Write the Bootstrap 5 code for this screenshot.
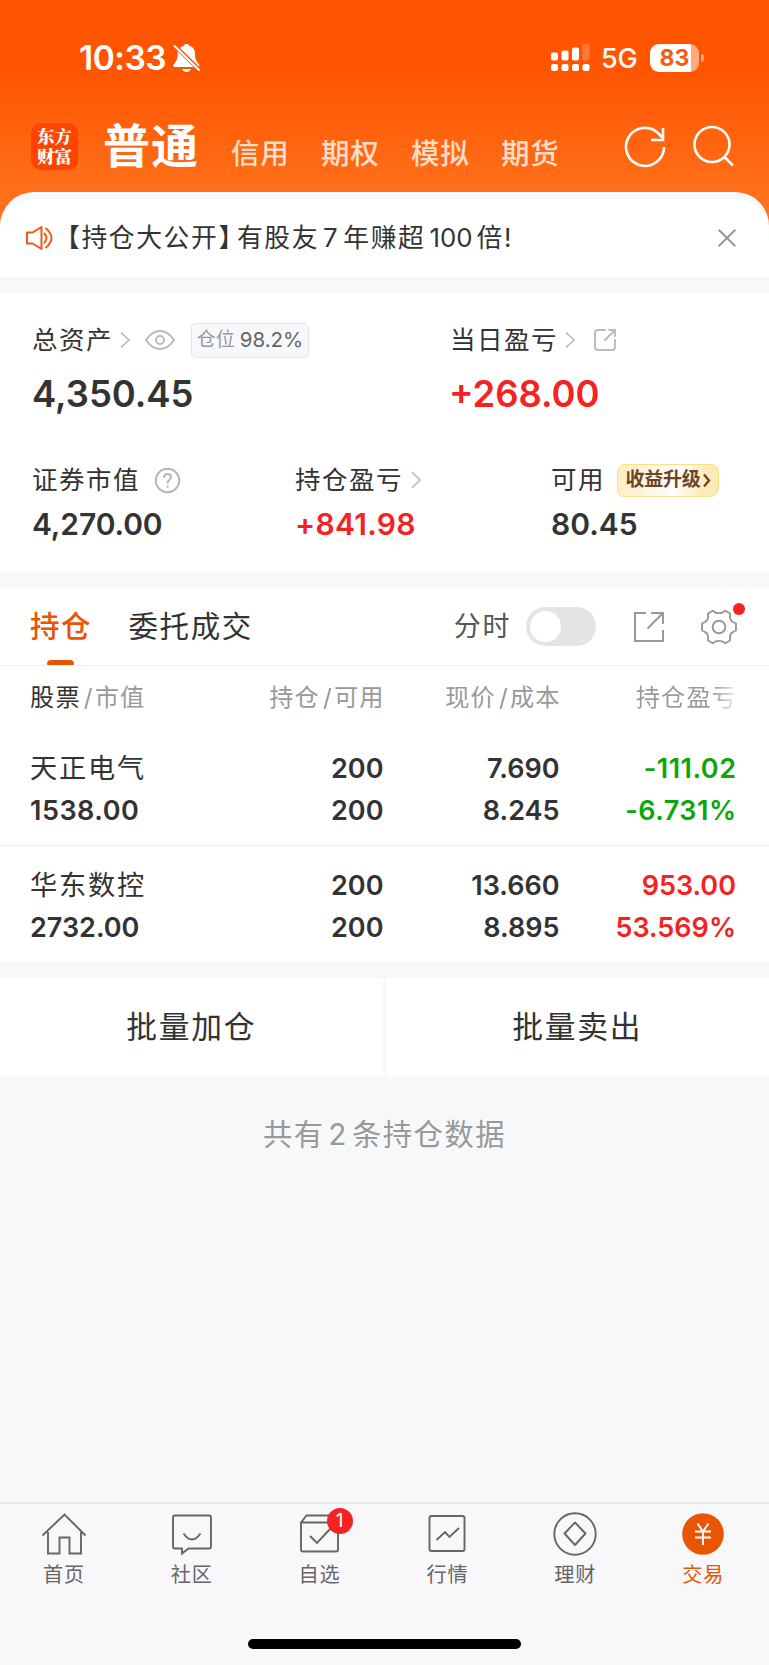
<!DOCTYPE html>
<html lang="zh-CN">
<head>
<meta charset="utf-8">
<meta name="viewport" content="width=device-width, initial-scale=1">
<title>普通交易 - 持仓</title>
<link href="https://cdn.jsdelivr.net/npm/bootstrap@5.3.0/dist/css/bootstrap.min.css" rel="stylesheet">
<style>
  :root { --ink:#333; --brand:#ea5504; --rise:#f52222; --fall:#0aa60a; --soft:#999; --page:#f7f8fa; }
  body { font-family: Inter, "Noto Sans CJK SC", sans-serif; color: var(--ink); background: var(--page); line-height: 1; }
  svg { display:block; fill:none; flex:none; overflow:visible; }
  .screen { height: 1665px; white-space: nowrap; overflow: hidden; }
  .top { background: linear-gradient(#ff5500 0, #ff5500 70px, #ff6f1a 192px, #ff7722 240px); height: 240px; }
  .status { height: 116px; padding-left: 79px; padding-right: 65px; color:#fff; }
  .clock { font-size: 33.5px; font-weight: 600; width: 94px; letter-spacing: -.5px; padding-top: 1px; }
  .net { font-size: 27px; font-weight: 500; width: 37px; margin-left: 11px; letter-spacing: -.3px; padding-top: 1px; }
  .battery { width: 49px; height: 28px; border-radius: 9px; background: linear-gradient(90deg,#fff 41px,rgba(255,255,255,.5) 41px); color:#f65a0c; font-size: 23px; font-weight: 700; line-height: 28px; margin-left: 12px; }
  .nub { width: 3px; height: 8px; border-radius: 0 5px 5px 0; background: rgba(255,255,255,.5); margin-left: 2px; }
  .brandbar { height: 76px; padding-left: 31px; }
  .logo { width: 47px; height: 47px; border-radius: 10px; background:#ff4400; color:#fff; font: 900 17.5px/20px "Noto Serif CJK SC","Noto Sans CJK SC",serif; margin-top: 7px; padding-top: 3px; }
  .current { font-size: 47px; font-weight: 700; letter-spacing: 1px; line-height: 60px; margin-left: 25px; width: 128px; color: #fff; }
  .alt { font-size: 28.5px; font-weight: 500; letter-spacing: .8px; line-height: 76px; width: 90px; color: rgba(255,255,255,.8); }
  .sheet { margin-top: -48px; border-radius: 34px 34px 0 0; background: #fff; border-top: 7px solid var(--page); height: 85px; padding-left: 26px; padding-right: 33px; }
  .notice { font-size: 25.8px; letter-spacing: 1.6px; margin-left: 1px; }
  .half { font-feature-settings: "halt"; margin-right: 4px; }
  .gap-band { height: 16px; background: var(--page); }
  .assets { height: 279px; padding: 26px 31px 0 32px; }
  .cap-lbl { font-size: 25.5px; letter-spacing: 1.5px; line-height: 42px; }
  .pos { width: 118px; height: 35px; border: 1px solid #e4e5ea; border-radius: 5px; background: #f7f8fb; font-size: 20.5px; color:#666; }
  .big { font-size: 36.4px; font-weight: 600; line-height: 50px; margin-top: 8px; }
  .mid { font-size: 30px; font-weight: 600; line-height: 36px; margin-top: 5px; }
  .w-l { width: 418px; } .w-1 { width: 263px; } .w-2 { width: 256px; }
  .up { color: var(--rise); } .down { color: var(--fall); }
  .promo { width: 102px; height: 33px; border: 1.5px solid #fbe08a; border-radius: 8px 7px 9px 7px; background: linear-gradient(100deg,#ffedc0,#fffaf0 45%,#fff 58%,#ffeab5 85%); color:#6b4528; font-size: 19px; font-weight: 700; }
  .tabs { height: 78px; border-bottom: 1px solid #f0f0f2; padding-left: 30px; padding-right: 32px; font-size: 29.5px; letter-spacing: 1.6px; }
  .tab-on { color: var(--brand); font-weight: 500; height: 77px; line-height: 77px; width: 98.5px; }
  .tab-on::after { content:""; position:absolute; left:17px; bottom:0; width:27px; height:5px; border-radius: 4px 4px 1px 1px; background: var(--brand); }
  .toggle { width: 70px; height: 39px; border-radius: 20px; background:#e4e4e7; padding: 4px; }
  .toggle i { display:block; width:31px; height:31px; border-radius:50%; background:#fff; }
  .dot { width: 12px; height: 12px; right: -8px; top: -6px; background: var(--rise); }
  .grid4 { display:grid; grid-template-columns: 165px 188.500px 176px 176.500px; padding-left: 30px; text-align: right; }
  .grid4 > :first-child { text-align: left; }
  .thead4 { height: 64px; line-height: 64px; font-size: 24.2px; letter-spacing: 1.2px; color: var(--soft); }
  .thead4 > * { margin-right: -1.2px; }
  .sl { padding: 0 1px 0 3px; }
  .fade-r { background: linear-gradient(90deg,#999 76%,#eee 99%); -webkit-background-clip:text; background-clip:text; color: transparent; }
  .holding { height: 116px; padding-top: 19px; font-size: 27px; line-height: 42px; font-weight: 600; }
  .first { padding-top: 18px; border-bottom: 1px solid #f0f0f2; }
  .wide { letter-spacing: .5px; margin-right: -.5px; }
  .stock { font-weight: 400; letter-spacing: 1.8px; font-size: 27.2px; }
  .batch { height: 98px; font-size: 30.8px; letter-spacing: 1.7px; }
  .batch > div { background:#fff; }
  .count { font-size: 29.3px; letter-spacing: 1.5px; color: var(--soft); margin-top: 37px; line-height: 44px; }
  .dock { height: 163px; background:#f8f8fb; border-top: 2px solid #e9eaec; color:#666; }
  .dock .item { width: 127.85px; font-size: 20.2px; letter-spacing: .8px; }
  .dock svg { width: 48px; height: 48px; margin: 6px 0 3px; stroke: #666; stroke-width: 1.9; }
  .dock .lbl { line-height: 28px; margin-bottom: 1px; }
  .pip { width: 26px; height: 26px; background: var(--rise); color:#fff; font-size: 19px; line-height: 26px; left: 71px; top: 4px; letter-spacing: 0; }
  .homebar { width: 273px; height: 10px; border-radius: 5px; background:#000; margin-top: 49px; margin-left: 248px; }
</style>
</head>
<body>
<main class="screen d-flex flex-column">
  <header class="top flex-shrink-0">
    <div class="status d-flex align-items-center">
      <span class="clock">10:33</span>
      <svg width="27" height="28" viewBox="0 0 27 28"><path fill="#fff" d="M7 4C8.300 2.600 9.300 2.400 10.500 2 11 .4 12.200 0 13.500 0S16 .4 16.500 2C20.500 3 22 6 22 10c0 5 1 6.500 4 10.500.6 1 .5 1.700-.1 2.100L7 4ZM4.700 7.500 20.500 23H1.500C0 23 0 21.500.8 20.500 4 16.500 4.700 14 4.700 7.500ZM9 25h9c-.8 2-2.500 3-4.500 3S9.800 27 9 25Z"/><path stroke="#fff" stroke-width="2" stroke-linecap="round" d="m1.500 2 24.500 24"/></svg>
      <svg class="ms-auto" width="39" height="28" viewBox="0 0 39 28"><g fill="#fff"><rect x="0" y="8.500" width="7" height="8" rx="2"/><rect x="10.500" y="6.500" width="7" height="10" rx="2"/><rect x="21" y="3.500" width="7" height="13" rx="2"/><rect x="31.500" y="0" width="7" height="16.500" rx="2" opacity=".22"/><rect x="0" y="20" width="7" height="7" rx="2"/><rect x="10.500" y="20" width="7" height="7" rx="2"/><rect x="21" y="20" width="7" height="7" rx="2"/><rect x="31.500" y="20" width="7" height="7" rx="2"/></g></svg>
      <span class="net">5G</span>
      <div class="battery text-center">83</div><div class="nub"></div>
    </div>
    <nav class="brandbar d-flex">
      <div class="logo text-center">东方<br>财富</div>
      <span class="current">普通</span>
      <span class="alt">信用</span><span class="alt">期权</span><span class="alt">模拟</span><span class="alt">期货</span>
      <svg class="mt-2" style="margin-left:33px" width="42" height="42" viewBox="0 0 42 42" stroke="#fff" stroke-width="2.600"><path d="M40 23a19 19 0 1 1-5.500-13.500L39 14M39 4v12H27"/></svg>
      <svg style="margin:9px 0 0 27px" width="42" height="42" viewBox="0 0 42 42" stroke="#fff" stroke-width="2.600"><circle cx="19" cy="19.500" r="17.500"/><path d="m31.500 32 8.500 8.500"/></svg>
    </nav>
  </header>

  <section class="sheet d-flex align-items-center flex-shrink-0">
    <svg width="27" height="24" viewBox="0 0 27 24" stroke="#f05a14" stroke-width="2" stroke-linejoin="round" stroke-linecap="round"><path d="M1 6.500h5.500L15.500 1v22l-9-5.500H1ZM18.500 7.500q4 4.500 0 9M20 2.500q11 9.500 0 19"/></svg>
    <span class="notice">【持仓大公开<span class="half">】</span>有股友<span class="mx-1">7</span>年赚超<span class="mx-1" style="letter-spacing:0">100</span>倍!</span>
    <svg class="ms-auto" width="18" height="18" viewBox="0 0 18 18" stroke="#999" stroke-width="2"><path d="m.7.7 16.600 16.600m0-16.600L.7 17.300"/></svg>
  </section>
  <div class="gap-band flex-shrink-0"></div>

  <section class="assets bg-white flex-shrink-0">
    <div class="d-flex">
      <div class="w-l">
        <div class="cap-lbl d-flex align-items-center">总资产
          <svg style="margin-left:7px" width="10" height="16" viewBox="0 0 10 16" stroke="#bbb" stroke-width="1.700"><path d="m1 .5 8 7.500-8 7.500"/></svg>
          <svg style="margin-left:15px" width="30" height="20" viewBox="0 0 30 20" stroke="#bbb" stroke-width="2"><path d="M1 10Q7 1 15 1t14 9Q23 19 15 19T1 10Z"/><circle cx="15" cy="10" r="4"/></svg>
          <div class="pos d-flex align-items-center justify-content-center" style="margin-left:16px;letter-spacing:0"><span style="color:#999;font-size:19px;margin-right:5px">仓位</span>98.2%</div>
        </div>
        <div class="big">4,350.45</div>
      </div>
      <div>
        <div class="cap-lbl d-flex align-items-center">当日盈亏
          <svg style="margin-left:7px" width="10" height="16" viewBox="0 0 10 16" stroke="#bbb" stroke-width="1.700"><path d="m1 .5 8 7.500-8 7.500"/></svg>
          <svg style="margin-left:19px" width="22" height="22" viewBox="0 0 22 22" stroke="#bbb" stroke-width="1.900" stroke-linecap="round"><path d="M11 1H4Q1 1 1 4v14q0 3 3 3h14q3 0 3-3v-7M15 1h6v6M21 1 11 11"/></svg>
        </div>
        <div class="big up" style="margin-left:-1px">+268.00</div>
      </div>
    </div>
    <div class="d-flex" style="margin-top:40px">
      <div class="w-1">
        <div class="cap-lbl d-flex align-items-center">证券市值
          <svg style="margin-left:15px" width="25" height="25" viewBox="0 0 25 25" stroke="#b3b3b3" stroke-width="1.900"><circle cx="12.500" cy="12.500" r="11.700"/><path d="M9 10q0-4 3.500-4T16 9.500c0 2.500-3.500 2.700-3.500 5.500v.5M12.500 17.500v2.200"/></svg>
        </div>
        <div class="mid" style="letter-spacing:-.1px">4,270.00</div>
      </div>
      <div class="w-2">
        <div class="cap-lbl d-flex align-items-center">持仓盈亏
          <svg style="margin-left:8px" width="10" height="16" viewBox="0 0 10 16" stroke="#bbb" stroke-width="1.700"><path d="m1 .5 8 7.500-8 7.500"/></svg>
        </div>
        <div class="mid up" style="letter-spacing:.3px">+841.98</div>
      </div>
      <div>
        <div class="cap-lbl d-flex align-items-center">可用
          <div class="promo d-flex align-items-center justify-content-center" style="margin-left:12px;letter-spacing:-.2px">收益升级<svg style="margin-left:2px" width="8" height="13" viewBox="0 0 8 13" stroke="#6b4528" stroke-width="2.300"><path d="m1 .5 5 6-5 6"/></svg></div>
        </div>
        <div class="mid">80.45</div>
      </div>
    </div>
  </section>
  <div class="gap-band flex-shrink-0"></div>

  <section class="bg-white flex-shrink-0">
    <div class="tabs d-flex align-items-center">
      <span class="tab-on position-relative">持仓</span>
      <span>委托成交</span>
      <span class="ms-auto" style="font-size:27px;color:#555">分时</span>
      <div class="toggle" style="margin-left:15px"><i></i></div>
      <svg style="margin-left:38px" width="30" height="30" viewBox="0 0 30 30" stroke="#999" stroke-width="2"><path d="M12 1H1v28h28V18M17 1h12v11M29 1 13.500 16.500"/></svg>
      <div class="position-relative" style="margin-left:37px">
        <svg width="36" height="36" viewBox="0 0 36 36" stroke="#999" stroke-width="1.900" stroke-linejoin="round"><circle cx="18" cy="18" r="6.300"/><path d="M11.700 1.700 14 3.300Q18 5 22 3.300L24.300 1.700 29 4.500V9Q29.500 12 32 13L35 14.500V21.500L32 23Q29.500 24 29 27V31.500L24.300 34.300 22 32.700Q18 31 14 32.700L11.700 34.300 7 31.500V27Q6.500 24 4 23L1 21.500V14.500L4 13Q6.500 12 7 9V4.500Z"/></svg>
        <span class="dot position-absolute rounded-circle"></span>
      </div>
    </div>
    <div class="grid4 thead4">
      <div><span style="color:#333">股票</span><span class="sl">/</span>市值</div>
      <div>持仓<span class="sl">/</span>可用</div>
      <div>现价<span class="sl">/</span>成本</div>
      <div><span class="fade-r">持仓盈亏</span></div>
    </div>
    <div class="grid4 holding first">
      <div><div class="stock">天正电气</div><span class="wide">1538.00</span></div>
      <div>200<br>200</div>
      <div>7.690<br>8.245</div>
      <div class="down wide">-111.02<br>-6.731%</div>
    </div>
    <div class="grid4 holding">
      <div><div class="stock">华东数控</div>2732.00</div>
      <div>200<br>200</div>
      <div>13.660<br>8.895</div>
      <div class="up">953.00<br>53.569%</div>
    </div>
  </section>
  <div class="gap-band flex-shrink-0"></div>

  <section class="batch d-flex flex-shrink-0" style="gap:3px">
    <div class="d-flex align-items-center justify-content-center" style="width:382.5px">批量加仓</div>
    <div class="d-flex align-items-center justify-content-center flex-fill">批量卖出</div>
  </section>
  <p class="count text-center mb-0">共有<span class="mx-1">2</span>条持仓数据</p>

  <footer class="dock mt-auto flex-shrink-0">
    <nav class="d-flex text-center">
      <div class="item d-flex flex-column align-items-center"><svg viewBox="0 0 48 48"><path d="M2.500 25.500 24.500 4.500l21 21M8 22v21.500h11.500v-16h10v16H41V22"/></svg><span class="lbl">首页</span></div>
      <div class="item d-flex flex-column align-items-center"><svg viewBox="0 0 48 48"><path d="M7 5.500h34q2 0 2 2v29q0 2-2 2H20.500L14 43.500v-5H7q-2 0-2-2v-29q0-2 2-2ZM15.500 23.500q8.500 12 17 0"/></svg><span class="lbl">社区</span></div>
      <div class="item d-flex flex-column align-items-center position-relative"><svg viewBox="0 0 48 48"><path d="M5 12.500h37M5 12.500l5.500-7H37l5 7v27q0 2-2 2H7q-2 0-2-2ZM14 26l7 7 14-15"/></svg><span class="pip position-absolute rounded-circle">1</span><span class="lbl">自选</span></div>
      <div class="item d-flex flex-column align-items-center"><svg viewBox="0 0 48 48"><rect x="6.500" y="6" width="35" height="35" rx="2"/><path d="m13.500 30 8.500-8 4.500 5L36 18"/></svg><span class="lbl">行情</span></div>
      <div class="item d-flex flex-column align-items-center"><svg viewBox="0 0 48 48"><circle cx="24" cy="24" r="20.700"/><path d="M24 12.500 34.500 23.500 24 35 13.500 23.500Z" stroke-linejoin="round"/></svg><span class="lbl">理财</span></div>
      <div class="item d-flex flex-column align-items-center" style="color:#ea5504"><svg viewBox="0 0 48 48"><circle cx="24" cy="24" r="20.800" fill="#ea5504" stroke="none"/><path stroke="#fff" d="m18.500 13.500 5.500 8 5.500-8M16 21.500h16M16 27.500h16M24 21.500V35"/></svg><span class="lbl">交易</span></div>
    </nav>
    <div class="homebar"></div>
  </footer>
</main>
<script src="https://cdn.jsdelivr.net/npm/bootstrap@5.3.0/dist/js/bootstrap.bundle.min.js"></script>
</body>
</html>
